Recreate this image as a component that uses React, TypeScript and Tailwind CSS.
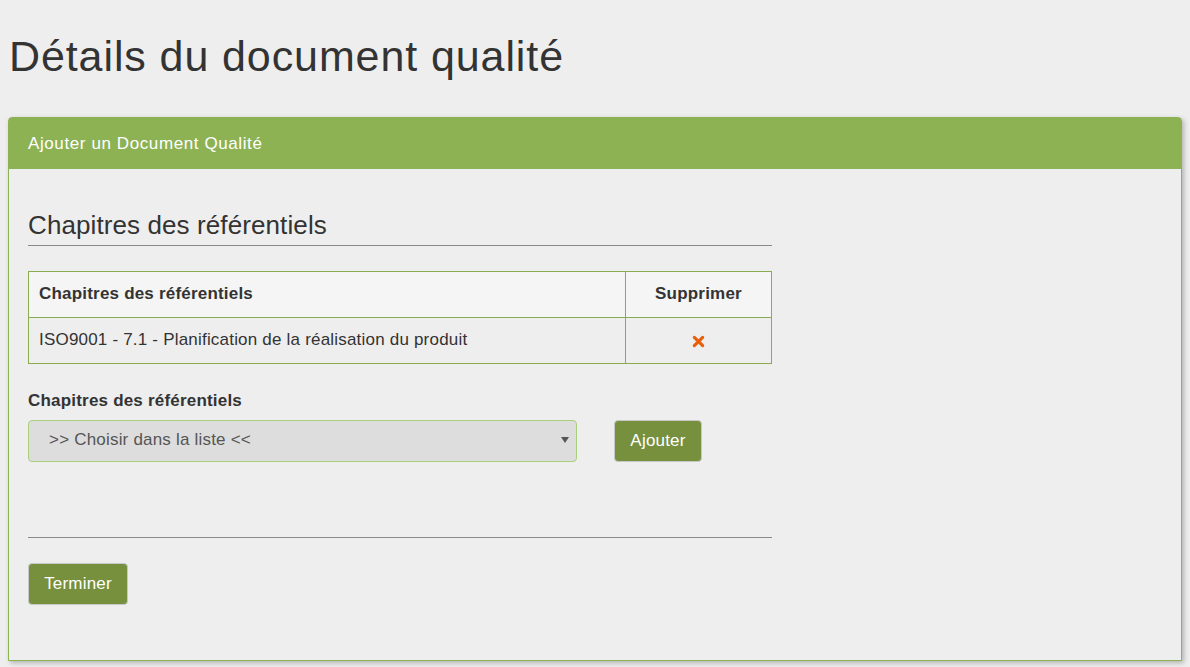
export default function App() {
  return (
    <div className="min-h-[667px] bg-[#eeeeee] px-2 pt-[25px] text-[#333] font-['Liberation_Sans',Arial,sans-serif] text-[17px] tracking-[0.2px]">
      <h1 className="ml-[1px] text-[43px] leading-[62px] font-normal tracking-[0.9px] text-[#333]">Détails du document qualité</h1>

      <div className="mt-[30px] rounded-t-[4px] border border-[#8db254] shadow-[2px_2px_5px_rgba(0,0,0,0.25)] bg-[#eeeeee]">
        <div className="h-[51px] bg-[#8db254] px-[19px] flex items-center text-white text-[17px] tracking-[0.6px]">
          Ajouter un Document Qualité
        </div>

        <div className="px-[19px] pt-[40px] pb-[55px]">
          <div className="w-[744px]">
            <h3 className="text-[26px] leading-[32px] tracking-[0.1px] text-[#333] pb-[4px] border-b border-[#8a8a8a]">
              Chapitres des référentiels
            </h3>

            <table className="mt-[25px] w-full border-collapse">
              <thead>
                <tr className="bg-[#f5f5f5]">
                  <th className="h-[46px] border border-[#8aab52] px-[10px] pb-[2px] text-left font-bold">Chapitres des référentiels</th>
                  <th className="h-[46px] w-[146px] border border-[#8aab52] px-[10px] pb-[2px] text-center font-bold">Supprimer</th>
                </tr>
              </thead>
              <tbody>
                <tr>
                  <td className="h-[46px] border border-[#8aab52] px-[10px] pb-[2px]">ISO9001 - 7.1 - Planification de la réalisation du produit</td>
                  <td className="h-[46px] border border-[#8aab52] text-center">
                    <svg width="13" height="13" viewBox="0 0 14 14" className="inline-block">
                      <path d="M2.5 2.5 L11.5 11.5 M11.5 2.5 L2.5 11.5" stroke="#e8600c" strokeWidth="3.4" strokeLinecap="round" />
                    </svg>
                  </td>
                </tr>
              </tbody>
            </table>

            <div className="mt-[27px] font-bold leading-[20px]">Chapitres des référentiels</div>
            <div className="mt-[9px] flex items-center">
              <div className="relative w-[549px] h-[42px] rounded-[4px] border border-[#a9cf7b] bg-[#dddddd] flex items-center pl-[20px] pb-[2px] text-[#555]">
                &gt;&gt; Choisir dans la liste &lt;&lt;
                <span className="absolute right-[7px] top-[16px] w-0 h-0 border-l-[4px] border-r-[4px] border-t-[6px] border-l-transparent border-r-transparent border-t-[#555]"></span>
              </div>
              <button className="ml-[37px] h-[42px] w-[88px] rounded-[4px] border border-[#c8c8c8] bg-[#76903e] text-white">
                Ajouter
              </button>
            </div>

            <div className="mt-[75px] border-t border-[#8a8a8a]"></div>

            <button className="mt-[25px] h-[42px] w-[100px] rounded-[4px] border border-[#c8c8c8] bg-[#76903e] text-white">
              Terminer
            </button>
          </div>
        </div>
      </div>
    </div>
  );
}
